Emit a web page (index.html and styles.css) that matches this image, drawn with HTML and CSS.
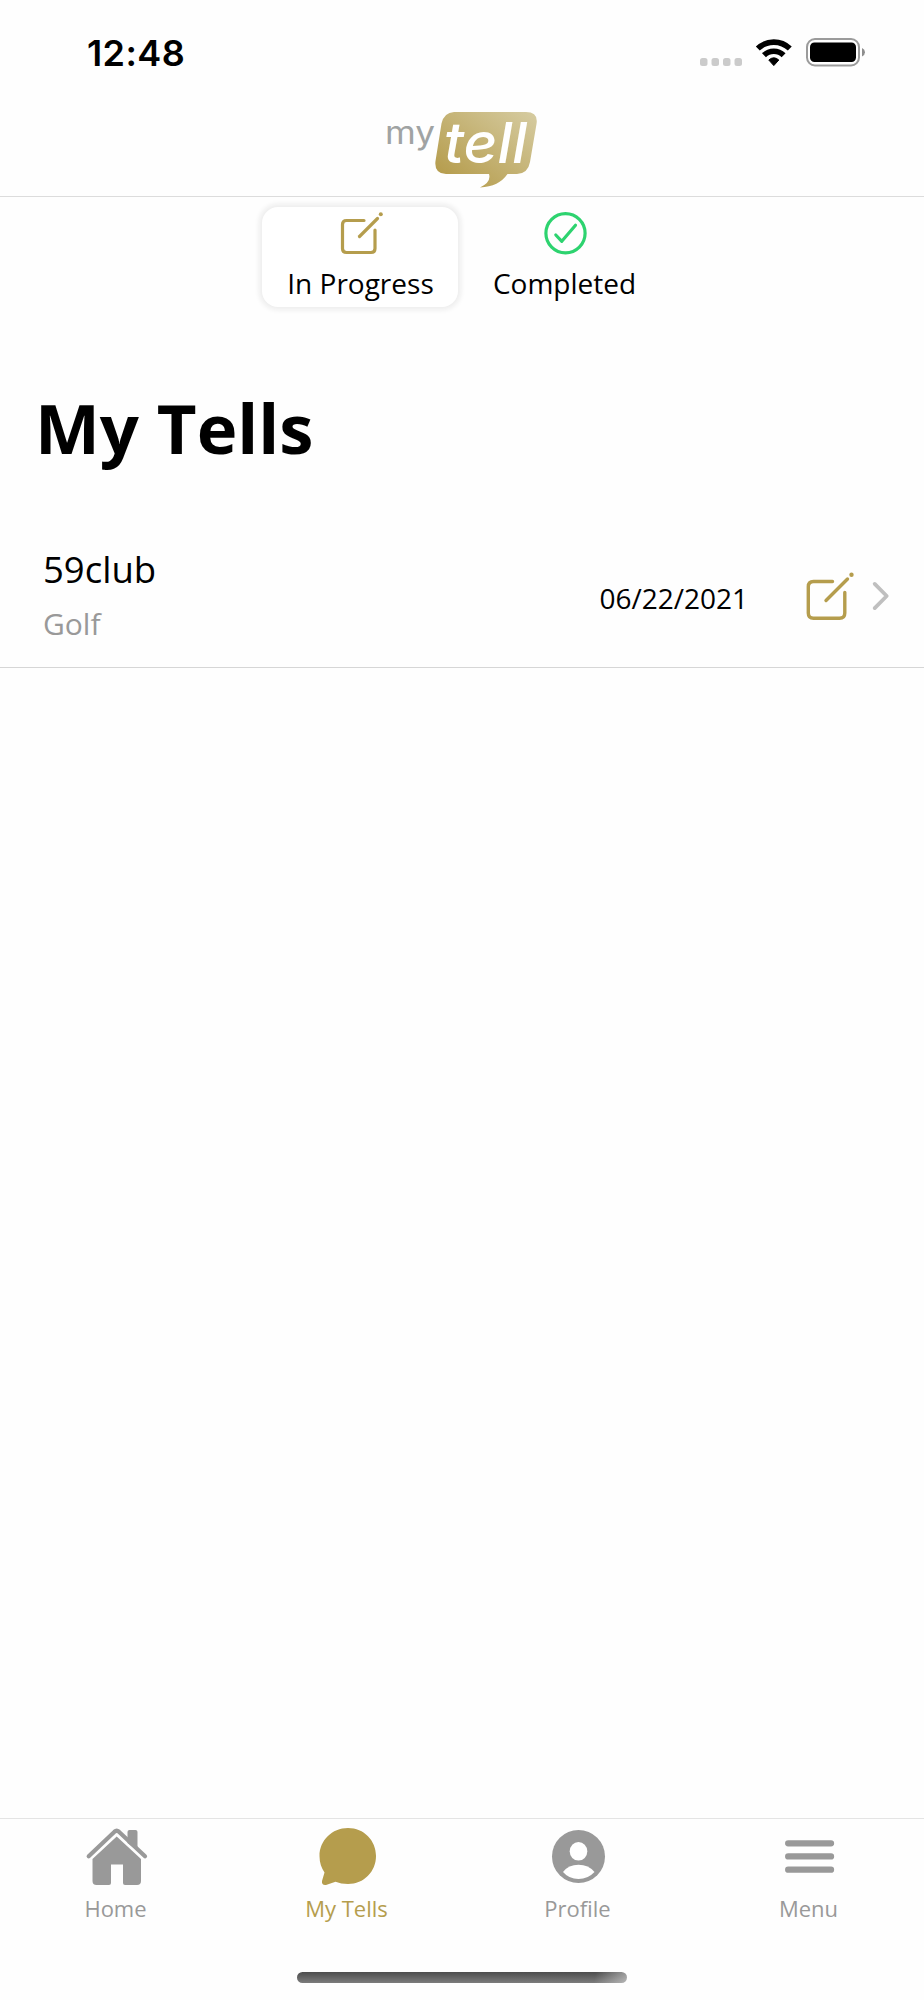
FILE: index.html
```html
<!DOCTYPE html>
<html lang="en">
<head>
  <meta charset="UTF-8">
  <meta name="viewport" content="width=device-width, initial-scale=1.0">
  <title>My Tells</title>
  <link rel="stylesheet" href="styles.css">
</head>
<body>
  <div class="status-bar">
    <span class="time">12:48</span>
    <svg class="status-icons" width="168" height="30" viewBox="699 37 168 30">
      <g fill="#cbcbcb">
        <rect x="700" y="58" width="7.5" height="8" rx="2.5"/>
        <rect x="711.5" y="58" width="7.5" height="8" rx="2.5"/>
        <rect x="723" y="58" width="7.5" height="8" rx="2.5"/>
        <rect x="734.5" y="58" width="7.5" height="8" rx="2.5"/>
      </g>
      <g fill="none" stroke="#000" stroke-width="5.6">
        <path d="M757.8 48.6a23 23 0 0 1 32 0"/>
        <path d="M764 55.2a14 14 0 0 1 19.6 0"/>
      </g>
      <path d="M768.8 60q5-4.4 10 0L773.8 65.6z" stroke="#000" stroke-width="1" stroke-linejoin="round"/>
      <rect x="807" y="39" width="52" height="26.5" rx="8" fill="none" stroke="#9b9b9b" stroke-width="2"/>
      <rect x="810" y="42.5" width="46" height="19.5" rx="4.5"/>
      <path d="M862 48q3 1.5 3 4.3t-3 4.3z" fill="#8e8e8e"/>
    </svg>
  </div>

  <header class="header">
    <svg class="logo" width="156" height="92" viewBox="384 104 156 92">
      <defs>
        <linearGradient id="gold" x1="0" y1="1" x2="1" y2="0">
          <stop offset="0.1" stop-color="#b59c4c"/>
          <stop offset="1" stop-color="#d6cca2"/>
        </linearGradient>
      </defs>
      <path fill="url(#gold)" d="M454 112H526Q538.5 112 536.5 124L530 162Q528 173.5 517 174H507.5Q499 186.500 480 187.5Q491.5 182 489 174H446Q434 173.5 435.5 161L441.5 123.5Q444 112.5 454 112z"/>
      <text class="logo-my" x="385" y="143.5" textLength="50" lengthAdjust="spacingAndGlyphs">my</text>
      <text class="logo-tell" x="444" y="162.5" textLength="83" lengthAdjust="spacingAndGlyphs">tell</text>
    </svg>
  </header>

  <nav class="filters">
    <div class="filter active">
      <svg width="46" height="46" viewBox="0 0 46 46" fill="none" stroke="#b59d4d" stroke-width="3.2" stroke-linecap="round" stroke-linejoin="round">
        <path d="M27 10.5H9.5Q5.500 10.5 5.5 14.5V38.5Q5.5 42.5 9.5 42.5H34Q38 42.5 38 38.5V20"/>
        <path d="M40.5 8.5L22.5 26.5"/>
        <circle cx="43.8" cy="4.3" r="2" fill="#b59d4d" stroke="none"/>
      </svg>
      <span class="label">In Progress</span>
    </div>
    <div class="filter">
      <svg width="46" height="46" viewBox="0 0 46 46" fill="none" stroke="#2dd36f" stroke-width="3.2" stroke-linecap="round" stroke-linejoin="round">
        <circle cx="23.5" cy="23.3" r="19.6"/>
        <path d="M13.8 25L19.8 31.3L33.5 15.3"/>
      </svg>
      <span>Completed</span>
    </div>
  </nav>

  <main class="content">
    <h1>My Tells</h1>
    <div class="tell">
      <div class="tell-info">
        <div class="tell-name">59club</div>
        <div class="tell-type">Golf</div>
      </div>
      <span class="tell-date">06/22/2021</span>
      <svg class="tell-edit" width="50" height="50" viewBox="0 0 50 50" fill="none" stroke="#b59d4d" stroke-width="3.4" stroke-linecap="round" stroke-linejoin="round">
        <path d="M27.5 10.5H8.5Q3.3 10.5 3.3 15.7V42Q3.3 47.3 8.5 47.3H34.5Q39.8 47.3 39.8 42V21.5"/>
        <path d="M42.5 8L21 29.5"/>
        <circle cx="46.5" cy="3.7" r="2.2" fill="#b59d4d" stroke="none"/>
      </svg>
      <svg class="chevron" width="18" height="30" viewBox="0 0 18 30" fill="none" stroke="#bfbfbf" stroke-width="3.8" stroke-linecap="round" stroke-linejoin="round">
        <path d="M2.7 2.9L14.7 15L2.7 27.1"/>
      </svg>
    </div>
  </main>

  <footer class="tab-bar">
    <div class="tab">
      <svg width="64" height="60" viewBox="-1 0 64 60" fill="#999">
        <path d="M42.5 16V5Q42.5 3 44.5 3H50.5Q52.5 3 52.5 5V24z"/>
        <path d="M3.7 29.3L29.5 4.7Q31.7 2.8 33.9 4.7L60 29.3" fill="none" stroke="#999" stroke-width="4.2" stroke-linecap="round"/>
        <path d="M31.7 9.5L56 32V54Q56 58 52 58H40Q38 58 38 56V37.5H26V56Q26 58 24 58H11.5Q7.5 58 7.5 54V32z"/>
      </svg>
      <span>Home</span>
    </div>
    <div class="tab selected">
      <svg width="64" height="60" viewBox="0 0 64 60" fill="#b59d4d">
        <path d="M33 1C49 1 61 13.5 61 29S49 57 33 57Q26 57 20.5 54.7L11 58Q6.5 58.5 7 54L9.5 45.5C6.5 41 4.5 36 4.5 29C4.5 13.5 17 1 33 1z"/>
      </svg>
      <span>My Tells</span>
    </div>
    <div class="tab">
      <svg width="64" height="60" viewBox="0 0 64 60">
        <circle cx="32.5" cy="29.5" r="26.5" fill="#999"/>
        <ellipse cx="32.5" cy="24.3" rx="8.8" ry="9.3" fill="#fff"/>
        <path d="M17 45Q22.5 37.8 32.5 37.8T48.5 45Q42 52 32.5 52T17 45z" fill="#fff"/>
      </svg>
      <span>Profile</span>
    </div>
    <div class="tab">
      <svg width="64" height="60" viewBox="0 0 64 60" stroke="#999" stroke-width="6.3" stroke-linecap="round">
        <path d="M11.2 16.3H54M11.2 29.4H54M11.2 42.7H54"/>
      </svg>
      <span>Menu</span>
    </div>
  </footer>
  <div class="home-indicator"></div>
</body>
</html>
```
FILE: styles.css
```css
* {
  box-sizing: border-box;
}

body {
  display: flex;
  flex-direction: column;
  height: 2000px;
  margin: 0;
  background-color: #fefefe;
  color: #000;
  font-family: "Open Sans", sans-serif;
}

svg {
  display: block;
  flex-shrink: 0;
}

.status-bar {
  display: flex;
  justify-content: space-between;
  align-items: flex-start;
  height: 104px;
  padding: 37px 57px 0 87px;
}

.time {
  font-family: Inter, sans-serif;
  font-size: 36px;
  font-weight: 600;
  line-height: 32px;
  letter-spacing: 0.4px;
}

.header {
  display: flex;
  justify-content: center;
  height: 93px;
  border-bottom: 1px solid #dcdcdc;
}

.logo-my {
  font-family: Inter, sans-serif;
  font-size: 32px;
  font-weight: 400;
  fill: #a0a3a3;
}

.logo-tell {
  font-family: Inter, sans-serif;
  font-size: 56px;
  font-style: italic;
  font-weight: 500;
  fill: #fff;
}

.filters {
  display: flex;
  justify-content: center;
  gap: 9px;
  padding-top: 10px;
}

.filter {
  display: flex;
  flex-direction: column;
  align-items: center;
  gap: 9px;
  width: 196px;
  height: 100px;
  padding-top: 3px;
  border-radius: 16px;
  font-size: 28px;
  line-height: 36px;
}

.filter.active {
  background-color: #fff;
  box-shadow: 0 0 5px 3px #ededed;
}

.filter.active .label {
  padding-left: 2px;
}

.content {
  flex: 1;
  padding-top: 73px;
}

h1 {
  margin: 0 0 50px;
  padding-left: 35px;
  font-size: 68.8px;
  font-weight: 700;
  line-height: 94px;
}

.tell {
  display: flex;
  align-items: center;
  height: 144px;
  padding: 0 34px 0 43px;
  border-bottom: 1px solid #d6d6d6;
}

.tell-info {
  flex: 1;
}

.tell-name {
  margin-bottom: 10px;
  font-size: 36.5px;
  line-height: 50px;
}

.tell-type {
  margin-bottom: 3px;
  color: #999;
  font-size: 30px;
  line-height: 40px;
}

.tell-date {
  padding-top: 5px;
  font-size: 28px;
  line-height: 38px;
}

.tell-edit {
  margin-left: 57px;
}

.chevron {
  margin-left: 17px;
}

.tab-bar {
  display: flex;
  height: 154px;
  padding-top: 8px;
  border-top: 1px solid #e4e4e4;
}

.tab {
  display: flex;
  flex: 1;
  flex-direction: column;
  align-items: center;
  gap: 6px;
  color: #999;
  font-size: 22px;
  line-height: 30px;
}

.tab.selected {
  color: #b59d4d;
}

.home-indicator {
  width: 330px;
  height: 11px;
  margin: 0 auto 17px;
  border-radius: 6px;
  background:
    linear-gradient(100deg, transparent 90%, rgba(255, 255, 255, 0.45)),
    linear-gradient(#4c4c4c, #7c7c7c);
}
```
